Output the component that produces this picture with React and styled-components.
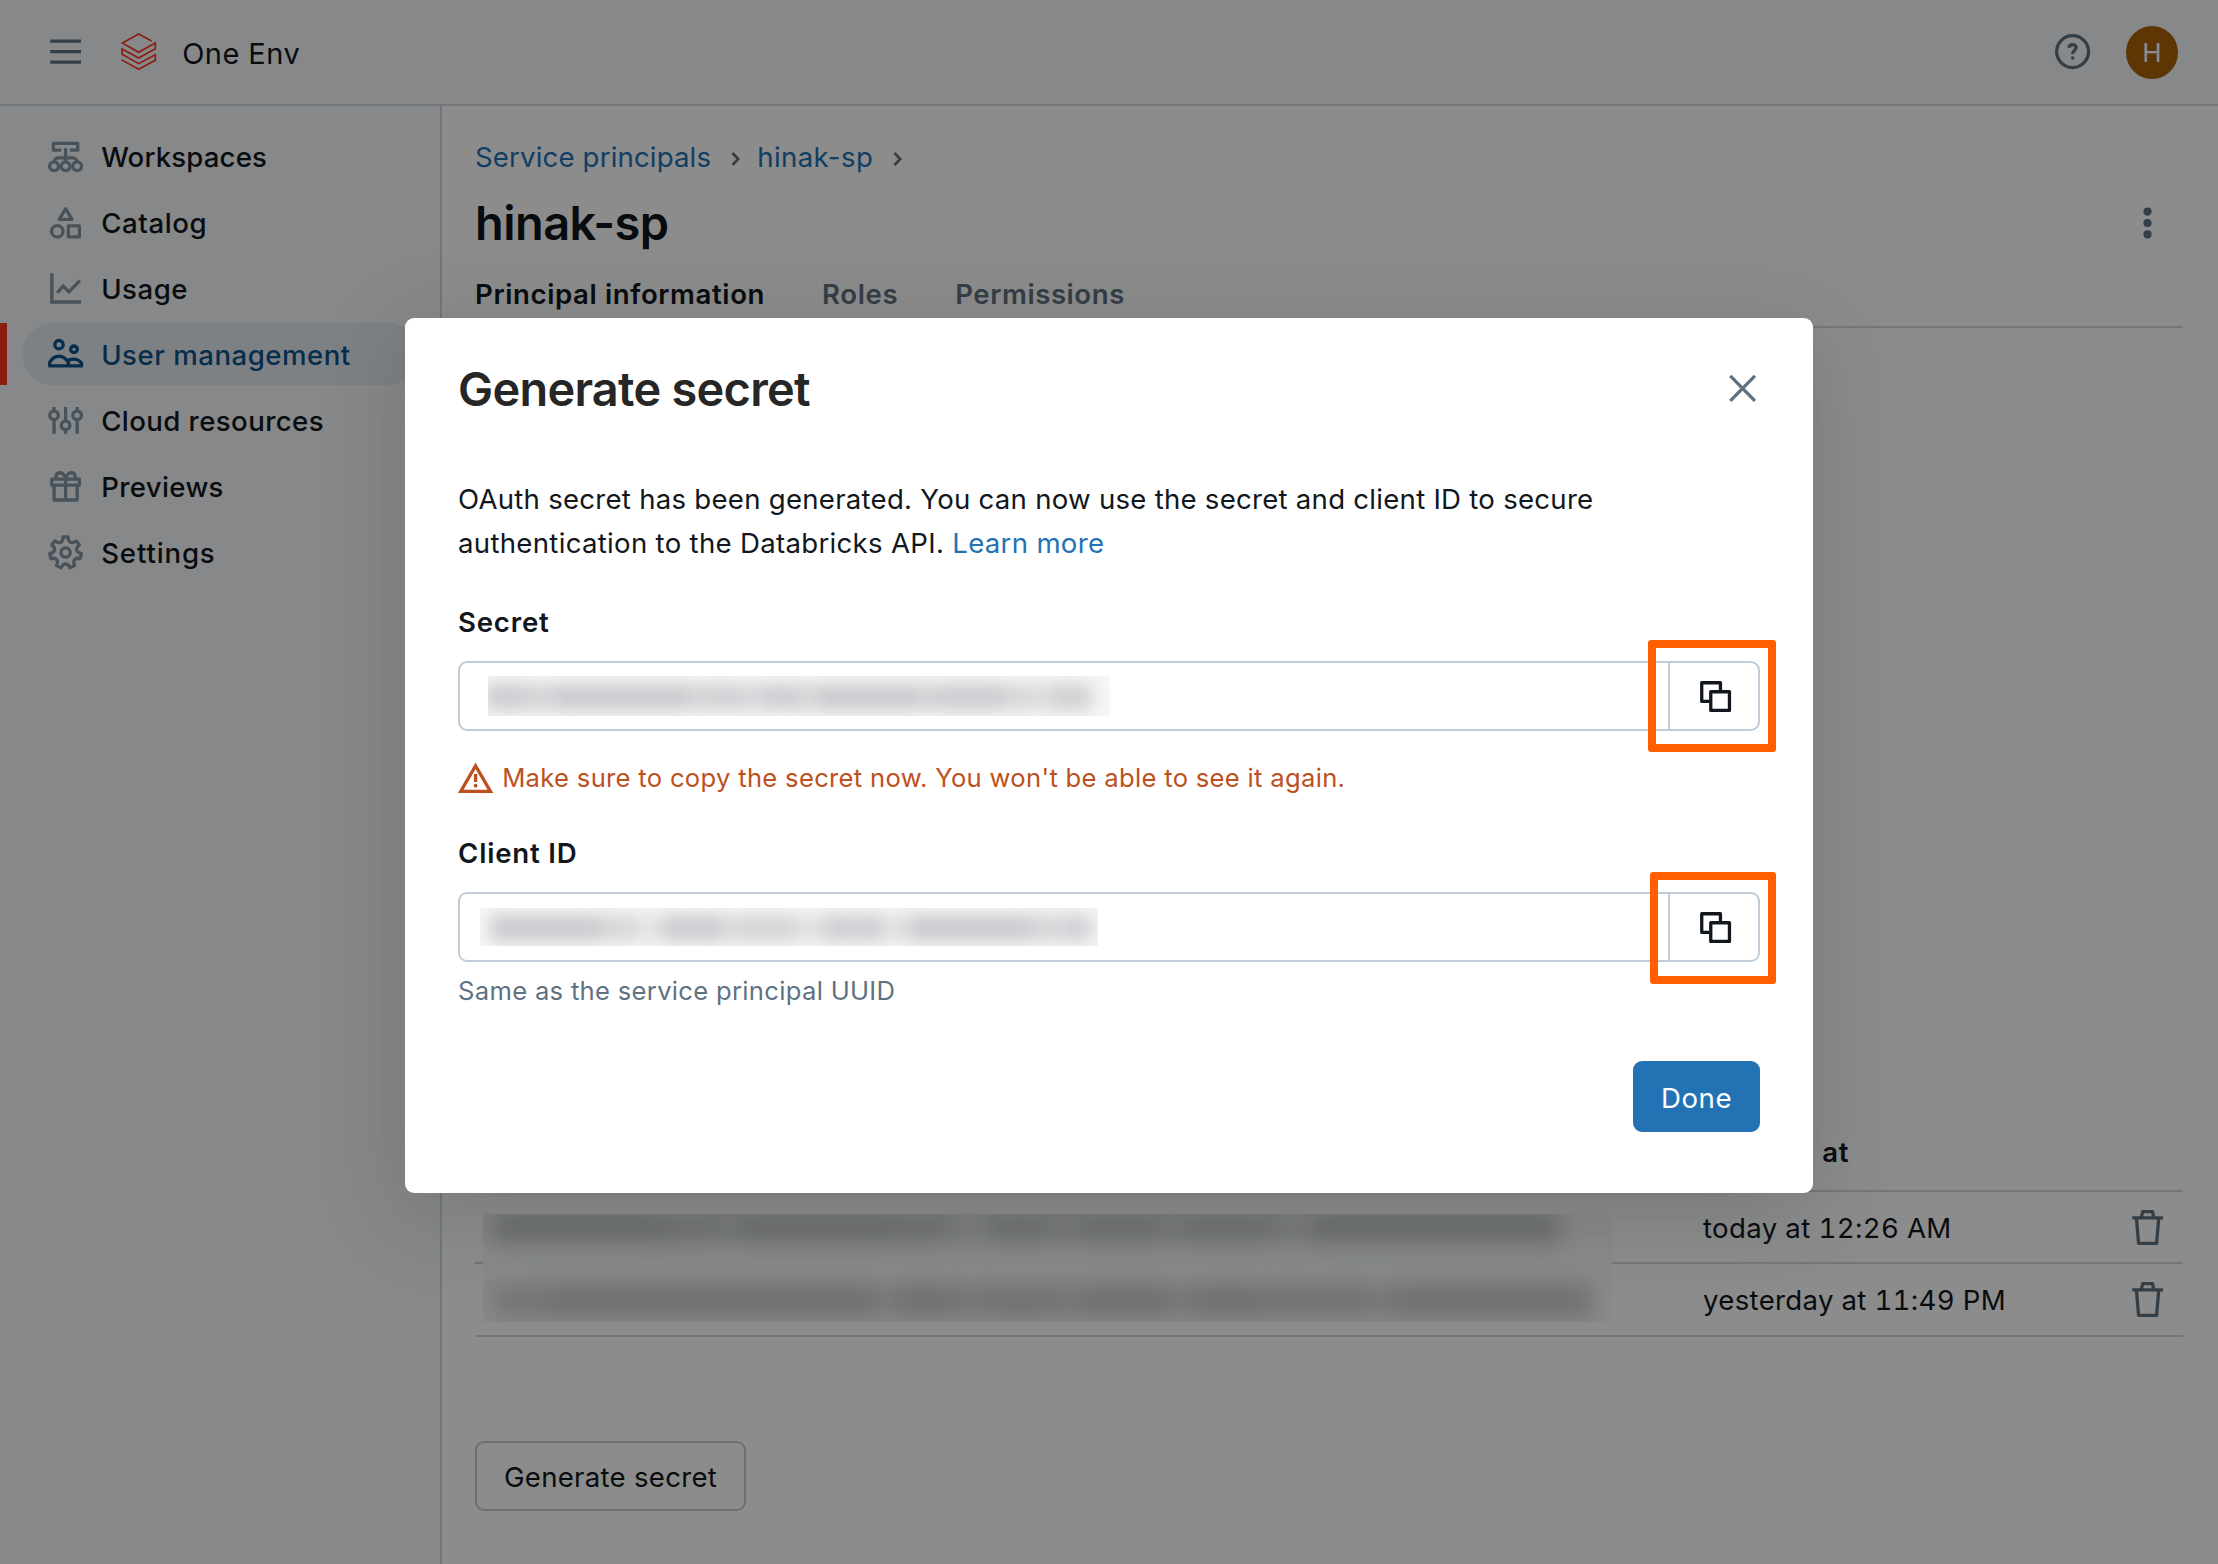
import React from "react";
import styled, { createGlobalStyle } from "styled-components";

const Global = createGlobalStyle`
  *, *::before, *::after { box-sizing: border-box; }
  body {
    margin: 0;
    background: #fff;
    color: #11171c;
    font-family: Inter, "Liberation Sans", sans-serif;
    font-size: 27.6px;
    line-height: 44px;
    -webkit-font-smoothing: antialiased;
  }
  button { font: inherit; color: inherit; background: none; border: 0; padding: 0; margin: 0; }
  a { color: #2272b4; text-decoration: none; }
  h1, h2, p { margin: 0; }
`;

const Page = styled.div`
  position: relative;
  display: flex;
  flex-direction: column;
  width: 2218px;
  height: 1564px;
  overflow: hidden;
`;

const Text = styled.span`
  letter-spacing: ${(p) => p.$ls || 0}px;
  white-space: nowrap;
`;

const Svg = styled.svg`
  display: block;
  flex: none;
  width: 35.2px;
  height: 35.2px;
  fill: none;
  stroke: currentColor;
  stroke-width: 1.5;
  overflow: visible;
`;

const Icon = ({ children }) => (
  <Svg viewBox="0 0 16 16" aria-hidden="true">{children}</Svg>
);

/* ---------- top bar ---------- */
const TopBar = styled.header`
  display: flex;
  align-items: center;
  height: 106px;
  padding: 0 40px 0 48px;
  background: #f6f7f9;
  border-bottom: 2px solid #d1d9e1;
  flex: none;
`;
const IconButton = styled.button`
  color: #5f7281;
  display: flex;
`;
const Logo = styled.svg`
  width: 35px;
  height: 37.3px;
  margin: 0 26px 0 38px;
  fill: none;
  stroke: #ff3621;
  stroke-width: 5;
  overflow: visible;
`;
const Brand = styled.div`
  flex: 1;
  font-size: 29px;
  padding-top: 3px;
`;
const Avatar = styled.div`
  width: 52px;
  height: 53px;
  margin-left: 36px;
  border-radius: 50%;
  background: #aa6308;
  color: #fff;
  font-size: 26px;
  display: flex;
  align-items: center;
  justify-content: center;
  padding-top: 2px;
`;

/* ---------- side navigation ---------- */
const Body = styled.div`
  display: flex;
  flex: 1;
`;
const Sidebar = styled.nav`
  width: 442px;
  flex: none;
  display: flex;
  flex-direction: column;
  gap: 4px;
  padding-top: 19px;
  background: #f6f7f9;
  border-right: 2px solid #d1d9e1;
`;
const NavRow = styled.div`
  display: flex;
  height: 62px;
  padding-left: ${(p) => (p.$active ? 15 : 22)}px;
  padding-right: 22px;
  border-left: ${(p) => (p.$active ? "7px solid #ff3621" : "0")};
`;
const NavLink = styled.div`
  flex: 1;
  display: flex;
  align-items: center;
  gap: 18px;
  padding-top: 1px;
  padding-left: 26px;
  border-radius: 31px;
  font-weight: 500;
  background: ${(p) => (p.$active ? "#e5ecf0" : "transparent")};
  color: ${(p) => (p.$active ? "#0e538b" : "#11171c")};
  svg { color: ${(p) => (p.$active ? "#0e538b" : "#8396a5")}; }
`;

/* ---------- main ---------- */
const Main = styled.main`
  flex: 1;
  padding: 29px 35px 0 33px;
`;
const Crumbs = styled.div`
  display: flex;
  align-items: center;
  height: 44px;
`;
const Chevron = styled.svg`
  width: 9px;
  height: 14px;
  margin: 3px 17px 0 20px;
  fill: none;
  stroke: #5f7281;
  stroke-width: 2.6;
`;
const TitleRow = styled.div`
  display: flex;
  justify-content: space-between;
  align-items: center;
  height: 62px;
  margin-top: 12px;
  padding-right: 31px;
`;
const Title = styled.h1`
  font-size: 46.9px;
  line-height: 62px;
  font-weight: 600;
  padding-top: 2px;
`;
const Kebab = styled.svg`
  width: 9px;
  height: 32px;
  margin-top: 1px;
  fill: #5f7281;
`;
const Tabs = styled.div`
  display: flex;
  gap: 57px;
  margin-top: 18px;
  height: 57px;
  padding-top: 1px;
  border-bottom: 2px solid #d1d9e1;
`;
const Tab = styled.div`
  font-weight: 600;
  color: ${(p) => (p.$active ? "#11171c" : "#5f7281")};
`;
const Secrets = styled.section`
  position: relative;
  margin-top: 784px;
`;
const SecretRow = styled.div`
  display: grid;
  grid-template-columns: 1228px 1fr auto;
  align-items: center;
  height: ${(p) => p.$h}px;
  padding-top: 1px;
  padding-right: 18px;
  border-bottom: 2px solid #d1d9e1;
  font-weight: ${(p) => (p.$head ? 600 : 400)};
  font-feature-settings: "tnum";
`;
const Button = styled.button`
  display: flex;
  align-items: center;
  justify-content: center;
  width: ${(p) => p.$w}px;
  height: ${(p) => p.$h}px;
  border-radius: 9px;
  border: 2px solid ${(p) => (p.$primary ? "#2272b4" : "#c0cdd8")};
  background: ${(p) => (p.$primary ? "#2272b4" : "transparent")};
  color: ${(p) => (p.$primary ? "#fff" : "#11171c")};
  padding-top: ${(p) => (p.$primary ? 2 : 1)}px;
`;
const GenerateButton = styled(Button)`
  margin-top: 104px;
`;

/* ---------- redacted values ---------- */
const Redacted = styled.div`
  overflow: hidden;
  width: ${(p) => p.$w}px;
  height: ${(p) => p.$h}px;
  background: ${(p) => p.$bg || "#f7f7f7"};
`;
const RedactedTable = styled(Redacted)`
  position: absolute;
  left: 8px;
  top: 102px;
  z-index: 1;
`;
const Smudge = styled.div`
  display: flex;
  height: ${(p) => p.$h}px;
  margin: ${(p) => p.$m};
  filter: blur(${(p) => p.$blur}px);
`;
const Chunk = styled.i`
  flex: ${(p) => p.$n} 0 0;
  background: ${(p) => p.$color};
  opacity: ${(p) => p.$o};
`;
const Smudged = ({ parts, color, h, m, blur }) => (
  <Smudge $h={h} $m={m} $blur={blur}>
    {parts.map(([n, o], i) => <Chunk key={i} $n={n} $o={0.4 + 0.6 * o} $color={color} />)}
  </Smudge>
);

/* ---------- dialog ---------- */
const Overlay = styled.div`
  position: absolute;
  inset: 0;
  z-index: 2;
  display: flex;
  justify-content: center;
  align-items: flex-start;
  padding-top: 318px;
  background: rgba(0, 0, 0, 0.45);
`;
const Dialog = styled.div`
  width: 1408px;
  height: 875px;
  padding: 40px 53px 0;
  border-radius: 9px;
  background: #fff;
  box-shadow: 0 18px 88px rgba(31, 39, 45, 0.2);
`;
const DialogHead = styled.div`
  display: flex;
  align-items: center;
  justify-content: space-between;
  height: 62px;
`;
const DialogTitle = styled.h2`
  font-size: 46.9px;
  line-height: 62px;
  font-weight: 600;
  color: #262626;
`;
const Copy = styled.p`
  margin-top: 57px;
`;
const Label = styled.div`
  margin-top: ${(p) => p.$mt}px;
  font-weight: 600;
`;
const Field = styled.div`
  display: flex;
  height: 70px;
  margin-top: 17px;
  border: 2px solid #c0cdd8;
  border-radius: 9px;
`;
const FieldValue = styled.div`
  flex: 1;
  padding: ${(p) => p.$pad};
`;
const CopyButton = styled.button`
  position: relative;
  display: flex;
  align-items: center;
  justify-content: center;
  width: 92px;
  margin-right: -2px;
  padding-top: 1px;
  padding-left: 1px;
  border-left: 2px solid #c0cdd8;
`;
const Highlight = styled.span`
  position: absolute;
  top: ${(p) => p.$top}px;
  left: ${(p) => p.$left}px;
  width: ${(p) => p.$w}px;
  height: 112px;
  border: 8px solid #ff5f00;
  border-radius: 3px;
`;
const Warning = styled.div`
  display: flex;
  align-items: center;
  gap: 9px;
  height: 44px;
  margin-top: 25px;
  color: #be501e;
  font-size: 25.6px;
`;
const Hint = styled.div`
  margin-top: 7px;
  color: #5f7281;
  font-size: 25.6px;
`;
const Footer = styled.div`
  display: flex;
  justify-content: flex-end;
  margin-top: 48px;
`;

/* ---------- icons ---------- */
const gearPath = (() => {
  const pts = [];
  for (let k = 0; k < 7; k++) {
    const a = -90 + (k * 360) / 7;
    [[-9, 7.2], [9, 7.2], [14, 5.7], [25.7, 5.1], [37.4, 5.7]].forEach(([d, r]) => {
      const t = ((a + d) * Math.PI) / 180;
      pts.push(`${(8 + r * Math.cos(t)).toFixed(2)} ${(8 + r * Math.sin(t)).toFixed(2)}`);
    });
  }
  return `M${pts.join("L")}Z`;
})();

const MenuIcon = () => <Icon><path d="M1 3.2h14M1 8h14M1 12.8h14" /></Icon>;
const HelpIcon = () => (
  <Icon>
    <circle cx="8" cy="8" r="7.25" />
    <path d="M6.45 6.3C6.45 5.4 7.1 4.8 8 4.8s1.6.6 1.6 1.45C9.6 7.4 8 7.4 8 9.1" />
    <circle cx="8" cy="10.9" r=".8" fill="currentColor" stroke="none" />
  </Icon>
);
const WorkspacesIcon = () => (
  <Icon>
    <path d="M6 5.1H2.45V2H13.55V5.1H10M8 4.2V10.3M2.9 10.2C2.9 9.3 3.7 8.6 4.7 8.6h6.6c1 0 1.8.7 1.8 1.6" strokeLinejoin="round" />
    <circle cx="2.75" cy="12.4" r="2" /><circle cx="8" cy="12.4" r="2" /><circle cx="13.25" cy="12.4" r="2" />
  </Icon>
);
const CatalogIcon = () => (
  <Icon>
    <path d="M8 1.7 10.9 6.5H5.1Z" strokeLinejoin="round" />
    <circle cx="4.25" cy="12" r="2.6" />
    <rect x="9.25" y="9.5" width="5" height="5" strokeLinejoin="round" />
  </Icon>
);
const UsageIcon = () => (
  <Icon><path d="M1.75 1V14.1H15M4.2 9.9 6.9 6.9 9.5 9.5 14.5 4.4" /></Icon>
);
const UsersIcon = () => (
  <Icon>
    <circle cx="5" cy="3.5" r="1.9" /><circle cx="11.8" cy="5.6" r="1.5" />
    <path d="M.75 13.15V11.5C1.9 9.6 3.3 8.75 5 8.75s3.1.85 4.25 2.75v1.65ZM8.7 10.9c.9-.6 1.9-.85 2.9-.85 1.5 0 2.8.6 3.65 1.85v1.25H9.25" strokeLinejoin="round" />
  </Icon>
);
const SlidersIcon = () => (
  <Icon>
    <circle cx="2.75" cy="5.6" r="1.95" /><circle cx="8" cy="10.15" r="1.95" /><circle cx="13.25" cy="5.6" r="1.95" />
    <path d="M2.75 1.8v1.9M2.75 7.5V14M13.25 1.8v1.9M13.25 7.5V14M8 1.8V8.2M8 12.1V14" />
  </Icon>
);
const GiftIcon = () => (
  <Icon>
    <path d="M1.7 4.6H14.3V7.3H1.7ZM2.75 7.3V14.1H13.25V7.3M8 4.6V14.1M8 4.6C7.8 2.9 6.7 1.7 5.3 1.7 3.8 1.7 3.2 3.3 4 4.5M8 4.6C8.2 2.9 9.3 1.7 10.7 1.7c1.5 0 2.1 1.6 1.3 2.8" strokeLinejoin="round" />
  </Icon>
);
const GearIcon = () => (
  <Icon><path d={gearPath} strokeLinejoin="round" /><circle cx="8" cy="8" r="2.1" /></Icon>
);
const TrashIcon = () => (
  <Icon><path d="M1 3.6H15M5.1 3.6 5.8.75H10.2L10.9 3.6M2.95 3.9 3.9 15.15H12.1L13.05 3.9" strokeLinejoin="round" /></Icon>
);
const CloseIcon = () => <Icon><path d="M2.4 2.2 13.6 13.6M13.6 2.2 2.4 13.6" /></Icon>;
const WarningIcon = () => (
  <Icon><path d="M8 2.6 14.75 14.3H1.25ZM8 6.4V10" /><circle cx="8" cy="11.7" r=".85" fill="currentColor" stroke="none" /></Icon>
);
const CopyIcon = () => (
  <Icon>
    <path d="M10.2 5.2V1.7H1.7V10.2H5.2" strokeLinejoin="round" />
    <rect x="5.8" y="5.8" width="8.5" height="8.5" strokeLinejoin="round" />
  </Icon>
);
const Crumb = () => <Chevron viewBox="0 0 9 14"><path d="M1.5 1 7.2 7 1.5 13" /></Chevron>;

const NAV = [
  { label: "Workspaces", icon: WorkspacesIcon, ls: 0.15 },
  { label: "Catalog", icon: CatalogIcon, ls: 0.6 },
  { label: "Usage", icon: UsageIcon, ls: 0.5 },
  { label: "User management", icon: UsersIcon, ls: 0.5, active: true },
  { label: "Cloud resources", icon: SlidersIcon, ls: 0.42 },
  { label: "Previews", icon: GiftIcon, ls: 0.35 },
  { label: "Settings", icon: GearIcon, ls: 0.85 },
];

const SECRET = [[3, 0.9], [2, 0.65], [9, 1], [1, 0.6], [3, 0.75], [1, 0.4], [3, 0.85], [1, 0.5], [7, 1], [1, 0.6], [5, 0.9], [2, 0.5], [1, 0.2], [3, 0.8]];
const CLIENT = [[9, 1], [3, 0.5], [2, 0], [5, 0.95], [1, 0.3], [5, 0.6], [2, 0.1], [5, 0.85], [2, 0.1], [10, 1], [3, 0.55], [2, 0.85]];
const ROW_A = [[9, 1], [3, 0.7], [1, 0.4], [8, 0.95], [3, 0.75], [2, 0.1], [3, 0.8], [2, 0.5], [4, 0.85], [1, 0.3], [5, 0.8], [2, 0.3], [13, 1]];
const ROW_B = [[3, 0.6], [10, 0.95], [8, 0.9], [1, 0.2], [3, 0.95], [2, 0.6], [4, 0.85], [1, 0.5], [5, 0.95], [1, 0.3], [4, 0.9], [6, 0.75], [1, 0.3], [11, 0.9]];

export default function App() {
  return (
    <Page>
      <Global />
      <TopBar>
        <IconButton><MenuIcon /></IconButton>
        <Logo viewBox="0 0 105 112">
          <path d="M92 24 53 3 4 30 53 58 103 30V47L53 75 3 48V64L53 92 103 65V82L53 109 1 80" />
        </Logo>
        <Brand><Text $ls={0.45}>One Env</Text></Brand>
        <IconButton><HelpIcon /></IconButton>
        <Avatar>H</Avatar>
      </TopBar>
      <Body>
        <Sidebar>
          {NAV.map(({ label, icon: Glyph, ls, active }) => (
            <NavRow key={label} $active={active}>
              <NavLink $active={active}><Glyph /><Text $ls={ls}>{label}</Text></NavLink>
            </NavRow>
          ))}
        </Sidebar>
        <Main>
          <Crumbs>
            <a><Text $ls={0.15}>Service principals</Text></a><Crumb />
            <a><Text $ls={0.4}>hinak-sp</Text></a><Crumb />
          </Crumbs>
          <TitleRow>
            <Title><Text $ls={-0.5}>hinak-sp</Text></Title>
            <Kebab viewBox="0 0 9 32">
              <circle cx="4.5" cy="4.6" r="4.1" /><circle cx="4.5" cy="16" r="4.1" /><circle cx="4.5" cy="27.4" r="4.1" />
            </Kebab>
          </TitleRow>
          <Tabs>
            <Tab $active><Text $ls={0.6}>Principal information</Text></Tab>
            <Tab><Text $ls={0.6}>Roles</Text></Tab>
            <Tab><Text $ls={0.55}>Permissions</Text></Tab>
          </Tabs>
          <Secrets>
            <SecretRow $h={80} $head><span /><Text $ls={0.7}>Created at</Text></SecretRow>
            <SecretRow $h={72}><span /><Text $ls={0.36}>today at 12:26 AM</Text><IconButton><TrashIcon /></IconButton></SecretRow>
            <SecretRow $h={73}><span /><Text $ls={0.32}>yesterday at 11:49 PM</Text><IconButton><TrashIcon /></IconButton></SecretRow>
            <RedactedTable $w={1129} $h={108} $bg="#fafbfb">
              <Smudged parts={ROW_A} color="#c4c7c7" h={30} m="-2px 52px 0 9px" blur={11} />
              <Smudged parts={ROW_B} color="#c4c7c7" h={30} m="44px 20px 0 9px" blur={11} />
            </RedactedTable>
          </Secrets>
          <GenerateButton $w={271} $h={70}><Text $ls={0.28}>Generate secret</Text></GenerateButton>
        </Main>
      </Body>
      <Overlay>
        <Dialog role="dialog">
          <DialogHead>
            <DialogTitle><Text $ls={-0.72}>Generate secret</Text></DialogTitle>
            <IconButton><CloseIcon /></IconButton>
          </DialogHead>
          <Copy>
            <Text $ls={0.256}>OAuth secret has been generated. You can now use the secret and client ID to secure</Text><br />
            <Text $ls={0.3}>authentication to the Databricks API. <a>Learn more</a></Text>
          </Copy>
          <Label $mt={35}><Text $ls={0.8}>Secret</Text></Label>
          <Field>
            <FieldValue $pad="13px 0 0 28px">
              <Redacted $w={622} $h={40}>
                <Smudged parts={SECRET} color="#c6c8cb" h={26} m="8px 18px 0 -4px" blur={9} />
              </Redacted>
            </FieldValue>
            <CopyButton><CopyIcon /><Highlight $top={-23} $left={-22} $w={128} /></CopyButton>
          </Field>
          <Warning><WarningIcon /><Text $ls={0.31}>Make sure to copy the secret now. You won't be able to see it again.</Text></Warning>
          <Label $mt={31}><Text $ls={0.8}>Client ID</Text></Label>
          <Field>
            <FieldValue $pad="14px 0 0 20px">
              <Redacted $w={618} $h={38}>
                <Smudged parts={CLIENT} color="#c6c8cb" h={26} m="7px 6px 0 10px" blur={9} />
              </Redacted>
            </FieldValue>
            <CopyButton><CopyIcon /><Highlight $top={-22} $left={-20} $w={126} /></CopyButton>
          </Field>
          <Hint><Text $ls={0.31}>Same as the service principal UUID</Text></Hint>
          <Footer><Button $primary $w={127} $h={71}><Text $ls={0.6}>Done</Text></Button></Footer>
        </Dialog>
      </Overlay>
    </Page>
  );
}
